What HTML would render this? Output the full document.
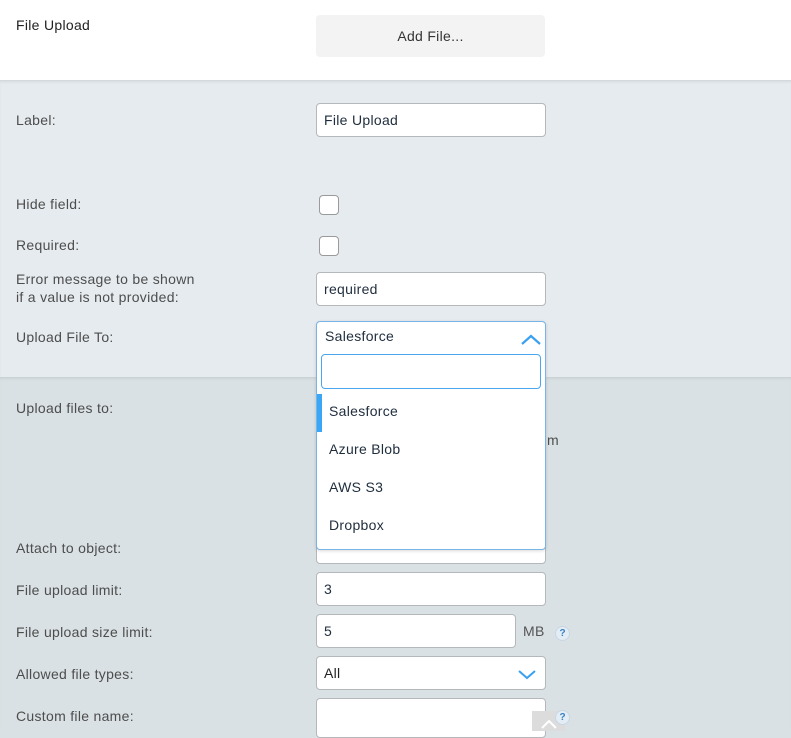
<!DOCTYPE html>
<html><head><meta charset="utf-8"><style>
*{box-sizing:border-box;margin:0;padding:0}
body{width:791px;height:729px;overflow:hidden;font-family:"Liberation Sans",sans-serif;font-size:14px;letter-spacing:0.3px;color:#4a4a4a;position:relative;background:#d9e1e4}
.abs{position:absolute}
.lbl{position:absolute;left:16px;color:#4d4d4d;font-size:14px;line-height:18px}
.inp{position:absolute;left:316px;width:230px;height:34px;background:#fff;border:1px solid #b5b8ba;border-radius:4px;padding:0 7px;line-height:32px;color:#1f2d3d;font-size:14px}
.cb{position:absolute;left:319px;width:20px;height:20px;background:#fff;border:1px solid #9a9a9a;border-radius:4px}
.q{position:absolute;width:15px;height:15px;border-radius:50%;background:#e3edf5;border:1px solid #c8d6e2;color:#3a7fc0;font-size:10px;font-weight:bold;text-align:center;line-height:13px;letter-spacing:0}
</style></head><body>
<div class="abs" style="left:0;top:0;width:791px;height:80px;background:#fff"></div>
<div class="abs" style="left:0;top:80px;width:791px;height:297px;background:#e6ebef;box-shadow:inset 0 3px 3px -2px #c9ced2"></div>
<div class="abs" style="left:0;top:377px;width:791px;height:352px;background:#d9e1e4;box-shadow:inset 0 3px 3px -2px #c3cacd"></div>

<div class="lbl" style="top:16px;color:#222">File Upload</div>
<div class="abs" style="left:316px;top:15px;width:229px;height:42px;background:#f3f3f3;border-radius:4px;text-align:center;line-height:42px;color:#333">Add File...</div>

<div class="lbl" style="top:111px">Label:</div>
<div class="inp" style="top:103px">File Upload</div>
<div class="lbl" style="top:195px">Hide field:</div>
<div class="cb" style="top:195px"></div>
<div class="lbl" style="top:236px">Required:</div>
<div class="cb" style="top:236px"></div>
<div class="lbl" style="top:270px">Error message to be shown<br>if a value is not provided:</div>
<div class="inp" style="top:272px">required</div>
<div class="lbl" style="top:328px">Upload File To:</div>

<div class="lbl" style="top:399px">Upload files to:</div>
<div class="abs" style="left:547px;top:432px;color:#4d4d4d">m</div>
<div class="lbl" style="top:539px">Attach to object:</div>
<div class="inp" style="top:530px;height:34px"></div>
<div class="lbl" style="top:581px">File upload limit:</div>
<div class="inp" style="top:572px">3</div>
<div class="lbl" style="top:623px">File upload size limit:</div>
<div class="inp" style="top:614px;width:200px">5</div>
<div class="abs" style="left:523px;top:623px;color:#555">MB</div>
<div class="q" style="left:555px;top:626px">?</div>
<div class="lbl" style="top:665px">Allowed file types:</div>
<div class="inp" style="top:656px;color:#222">All
<svg class="abs" style="right:9px;top:13px" width="18" height="10" viewBox="0 0 18 10"><path d="M1 1 L9 8 L17 1" fill="none" stroke="#3aa0f0" stroke-width="2"/></svg></div>
<div class="lbl" style="top:707px">Custom file name:</div>
<div class="inp" style="top:698px;height:40px"></div>
<div class="abs" style="left:532px;top:711px;width:33px;height:20px;background:#dcdcdc"></div>
<svg class="abs" style="left:540px;top:717px" width="18" height="12"><path d="M2 11 L9 4 L16 11" fill="none" stroke="#fff" stroke-width="2"/></svg>
<div class="q" style="left:555px;top:710px">?</div>

<!-- dropdown -->
<div class="abs" style="left:316px;top:321px;width:230px;height:229px;background:#fff;border:1px solid #79b4e6;border-radius:4px;box-shadow:0 1px 3px rgba(0,0,0,.15)">
 <div class="abs" style="left:8px;top:6px;color:#1f2d3d">Salesforce</div>
 <svg class="abs" style="left:204px;top:11px" width="20" height="12"><path d="M1 11 L10 3 L19 11" fill="none" stroke="#3aa0f0" stroke-width="2.2"/></svg>
 <div class="abs" style="left:4px;top:32px;width:220px;height:35px;border:1px solid #4aa6ee;border-radius:4px"></div>
 <div class="abs" style="left:0;top:72px;width:5px;height:38px;background:#3aa6f5"></div>
 <div class="abs" style="left:12px;top:81px;color:#1f2d3d">Salesforce</div>
 <div class="abs" style="left:12px;top:119px;color:#1f2d3d">Azure Blob</div>
 <div class="abs" style="left:12px;top:157px;color:#1f2d3d">AWS S3</div>
 <div class="abs" style="left:12px;top:195px;color:#1f2d3d">Dropbox</div>
</div>
</body></html>
